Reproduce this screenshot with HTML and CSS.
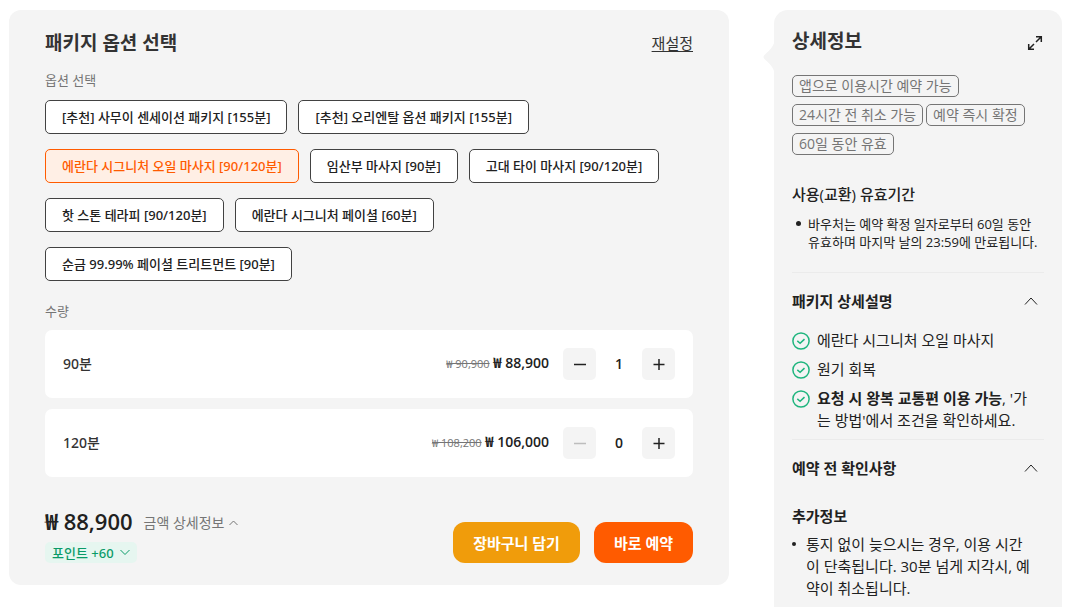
FILE: index.html
```html
<!DOCTYPE html>
<html lang="ko">
<head>
<meta charset="utf-8">
<meta name="viewport" content="width=device-width, initial-scale=1">
<title>패키지 옵션 선택</title>
<link rel="stylesheet" href="styles.css">
</head>
<body>
<div class="page">
  <main class="panel">
    <header class="panel-head">
      <h1 class="title">패키지 옵션 선택</h1>
      <button class="reset" type="button">재설정</button>
    </header>

    <h2 class="label">옵션 선택</h2>
    <div class="options">
      <button class="option" type="button">[추천] 사무이 센세이션 패키지 [155분]</button>
      <button class="option" type="button">[추천] 오리엔탈 옵션 패키지 [155분]</button>
      <button class="option selected" type="button" aria-pressed="true">에란다 시그니처 오일 마사지 [90/120분]</button>
      <button class="option" type="button">임산부 마사지 [90분]</button>
      <button class="option" type="button">고대 타이 마사지 [90/120분]</button>
      <button class="option" type="button">핫 스톤 테라피 [90/120분]</button>
      <button class="option" type="button">에란다 시그니처 페이셜 [60분]</button>
      <button class="option" type="button">순금 99.99% 페이셜 트리트먼트 [90분]</button>
    </div>

    <h2 class="label">수량</h2>
    <div class="units">
      <div class="unit">
        <span class="unit-name">90분</span>
        <span class="price"><s class="old">₩ 90,900</s> <b class="now">₩ 88,900</b></span>
        <div class="stepper">
          <button class="step" type="button" aria-label="90분 줄이기"><svg width="16" height="16" viewBox="0 0 16 16"><path d="M2 8.500h12"/></svg></button>
          <output class="count">1</output>
          <button class="step" type="button" aria-label="90분 늘리기"><svg width="16" height="16" viewBox="0 0 16 16"><path d="M2.500 8.500h11M8 3v11"/></svg></button>
        </div>
      </div>
      <div class="unit">
        <span class="unit-name">120분</span>
        <span class="price"><s class="old">₩ 108,200</s> <b class="now">₩ 106,000</b></span>
        <div class="stepper">
          <button class="step" type="button" disabled aria-label="120분 줄이기"><svg width="16" height="16" viewBox="0 0 16 16"><path d="M2 8.500h12"/></svg></button>
          <output class="count">0</output>
          <button class="step" type="button" aria-label="120분 늘리기"><svg width="16" height="16" viewBox="0 0 16 16"><path d="M2.500 8.500h11M8 3v11"/></svg></button>
        </div>
      </div>
    </div>

    <footer class="summary">
      <div class="total">
        <div class="total-line">
          <strong class="amount">₩ 88,900</strong>
          <button class="detail" type="button">금액 상세정보 <svg width="9" height="6" viewBox="0 0 9 6"><path d="M.5 5l4-4 4 4"/></svg></button>
        </div>
        <button class="points" type="button">포인트 +60 <svg width="10" height="7" viewBox="0 0 10 7"><path d="M.5 1L5 5.500 9.500 1"/></svg></button>
      </div>
      <div class="actions">
        <button class="action cart" type="button">장바구니 담기</button>
        <button class="action book" type="button">바로 예약</button>
      </div>
    </footer>
  </main>

  <aside class="side">
    <svg class="pointer" width="12" height="36" viewBox="0 0 12 36"><path d="M12 0C11 7 8 10 2 15.500Q-1 18 2 20.500C8 26 11 29 12 36z"/></svg>
    <header class="side-head">
      <h2 class="title">상세정보</h2>
      <button class="expand" type="button" aria-label="펼치기"><svg width="16" height="16" viewBox="0 0 16 16"><path d="M9 1.700h5.300V7M14 2L9 7M1.700 9v5.300H7M2 14l5-5"/></svg></button>
    </header>
    <ul class="tags">
      <li class="tag">앱으로 이용시간 예약 가능</li>
      <li class="tag">24시간 전 취소 가능</li>
      <li class="tag">예약 즉시 확정</li>
      <li class="tag">60일 동안 유효</li>
    </ul>

    <section class="validity">
      <h3 class="heading medium">사용(교환) 유효기간</h3>
      <ul class="notes small">
        <li>바우처는 예약 확정 일자로부터 60일 동안 유효하며 마지막 날의 23:59에 만료됩니다.</li>
      </ul>
    </section>

    <section class="fold">
      <button class="fold-head" type="button" aria-expanded="true">패키지 상세설명 <svg width="14" height="8" viewBox="0 0 14 8"><path d="M1 7.500l6-6.500 6 6.500"/></svg></button>
      <ul class="checks">
        <li><svg width="18" height="18" viewBox="0 0 18 18"><circle cx="9" cy="9" r="8.100"/><path d="M5.300 8.900l2.800 2.400 4.400-4.200"/></svg><span>에란다 시그니처 오일 마사지</span></li>
        <li><svg width="18" height="18" viewBox="0 0 18 18"><circle cx="9" cy="9" r="8.100"/><path d="M5.300 8.900l2.800 2.400 4.400-4.200"/></svg><span>원기 회복</span></li>
        <li><svg width="18" height="18" viewBox="0 0 18 18"><circle cx="9" cy="9" r="8.100"/><path d="M5.300 8.900l2.800 2.400 4.400-4.200"/></svg><span><b>요청 시 왕복 교통편 이용 가능</b>, '가는 방법'에서 조건을 확인하세요.</span></li>
      </ul>
    </section>

    <section class="fold">
      <button class="fold-head" type="button" aria-expanded="true">예약 전 확인사항 <svg width="14" height="8" viewBox="0 0 14 8"><path d="M1 7.500l6-6.500 6 6.500"/></svg></button>
      <h3 class="heading">추가정보</h3>
      <ul class="notes">
        <li>통지 없이 늦으시는 경우, 이용 시간이 단축됩니다. 30분 넘게 지각시, 예약이 취소됩니다.</li>
      </ul>
    </section>
  </aside>
</div>
</body>
</html>
```
FILE: styles.css
```css
* { box-sizing: border-box; }

body {
  margin: 0;
  background: #fff;
  color: #212121;
  font: 15px/22px "Open Sans", "Noto Sans CJK KR", sans-serif;
}

h1, h2, h3, ul { margin: 0; padding: 0; }
ul { list-style: none; }

button {
  margin: 0;
  padding: 0;
  border: 0;
  background: none;
  color: inherit;
  font: inherit;
  cursor: pointer;
}

svg {
  flex: none;
  fill: none;
  stroke: currentColor;
}

.page {
  display: grid;
  grid-template-columns: 5fr 2fr;
  gap: 45px;
  height: 100vh;
  padding: 10px 11px 0 9px;
  overflow: hidden;
}

.panel {
  align-self: start;
  padding: 20px 36px 22px;
  border-radius: 12px;
  background: #f4f4f4;
}

.panel-head, .side-head {
  display: flex;
  align-items: center;
  justify-content: space-between;
}

.title {
  color: #333;
  font-size: 19px;
  font-weight: 700;
  line-height: 26px;
}

.reset {
  color: #333;
  text-decoration: underline;
  text-underline-offset: 2px;
}

.label {
  margin-top: 14px;
  color: #757575;
  font-size: 13px;
  font-weight: 400;
  line-height: 20px;
}

.options {
  display: flex;
  flex-wrap: wrap;
  gap: 15px 11px;
  margin: 10px 0 20px;
  padding-right: 24px;
}

.option {
  height: 34px;
  padding: 0 16px;
  border: 1px solid #424242;
  border-radius: 5px;
  background: #fff;
  font-family: "Noto Sans", "Noto Sans CJK KR", sans-serif;
  font-size: 13px;
  font-weight: 500;
}

.selected {
  border-color: #ff5b00;
  background: #ffefe5;
  color: #ff5b00;
}

.units {
  display: grid;
  gap: 11px;
  margin-top: 9px;
}

.unit {
  display: flex;
  align-items: center;
  height: 68px;
  padding: 0 18px;
  border-radius: 7px;
  background: #fff;
  font-size: 14px;
}

.unit-name {
  color: #333;
  font-family: "Noto Sans", "Noto Sans CJK KR", sans-serif;
  font-weight: 500;
}

.price {
  margin-left: auto;
  padding-bottom: 2px;
}

.old {
  color: #757575;
  font-size: 11px;
}

.now { font-weight: 600; }

.stepper {
  display: flex;
  align-items: center;
  margin-left: 14px;
}

.step {
  display: grid;
  place-items: center;
  width: 33px;
  height: 32px;
  border-radius: 5px;
  background: #f4f4f4;
}

.step svg { stroke-width: 1.5; }
.step:disabled { color: #bdbdbd; }

.count {
  width: 46px;
  font-weight: 600;
  text-align: center;
}

.summary {
  display: flex;
  justify-content: space-between;
  margin-top: 30px;
}

.total-line {
  display: flex;
  align-items: center;
  gap: 11px;
  height: 28px;
}

.amount {
  font-size: 22px;
  font-weight: 600;
}

.detail {
  display: flex;
  align-items: center;
  gap: 4px;
  margin-top: 3px;
  color: #757575;
  font-size: 14px;
}

.points {
  display: flex;
  align-items: center;
  gap: 6px;
  height: 21px;
  margin-top: 7px;
  padding: 0 7px;
  border-radius: 5px;
  background: #e6f6f0;
  color: #0a9b68;
  font-family: "Noto Sans", "Noto Sans CJK KR", sans-serif;
  font-size: 13px;
  font-weight: 500;
  line-height: 20px;
}

.actions {
  display: flex;
  gap: 14px;
  padding-top: 15px;
}

.action {
  height: 41px;
  padding: 0 20px;
  border-radius: 12px;
  color: #fff;
  font-weight: 700;
}

.cart { background: #f09c0b; }
.book { background: #ff5b00; }

.side {
  position: relative;
  padding: 18px 18px 0;
  border-radius: 14px 14px 0 0;
  background: #f4f4f4;
}

.pointer {
  position: absolute;
  top: 29px;
  left: -11px;
  fill: #f4f4f4;
  stroke: none;
}

.expand {
  display: flex;
  padding: 4px 1px 0 0;
}

.expand svg { stroke-width: 1.5; }

.tags {
  display: flex;
  flex-wrap: wrap;
  gap: 7px 3px;
  margin-top: 21px;
}

.tag {
  height: 22px;
  padding: 0 6px;
  border: 1px solid #757575;
  border-radius: 5px;
  color: #757575;
  font-size: 14px;
  line-height: 19px;
}

.validity { margin-top: 28px; }

.heading {
  font-size: 15px;
  font-weight: 700;
  line-height: 22px;
}

.medium { font-weight: 500; }

.notes {
  padding: 0 10px 0 14px;
  word-break: break-all;
}

.notes li { position: relative; }

.notes li::before {
  content: "";
  position: absolute;
  top: 9px;
  left: -14px;
  width: 4px;
  height: 4px;
  border-radius: 50%;
  background: #212121;
}

.small {
  margin: 10px 0 0 4px;
  padding: 0 0 0 12px;
  font-size: 13px;
  line-height: 18px;
}

.small li::before {
  top: 6px;
  left: -12px;
  width: 5px;
  height: 5px;
}

.fold {
  margin-top: 21px;
  border-top: 1px solid #ebebeb;
}

.fold + .fold { margin-top: 8px; }

.fold-head {
  display: flex;
  align-items: center;
  justify-content: space-between;
  width: 100%;
  margin: 17px 0;
  padding-right: 6px;
  font-weight: 700;
}

.fold .heading { margin: 26px 0 6px; }

.checks {
  display: grid;
  gap: 7px;
  padding-right: 10px;
  word-break: break-all;
}

.checks li {
  display: flex;
  gap: 7px;
}

.checks svg {
  margin-top: 3px;
  stroke: #1fb57e;
  stroke-width: 1.5;
}
```
